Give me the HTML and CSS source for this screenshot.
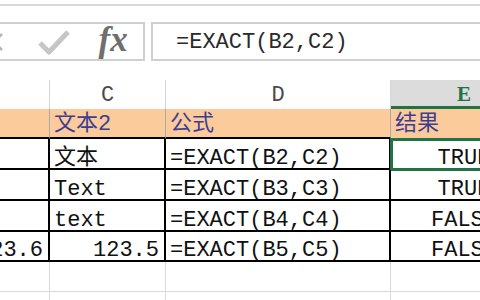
FILE: index.html
```html
<!DOCTYPE html>
<html lang="zh-CN">
<head>
  <meta charset="UTF-8">
  <meta name="viewport" content="width=device-width, initial-scale=1.0">
  <title>EXACT</title>
  <link rel="stylesheet" href="styles.css">
</head>
<body>
  <div class="ribbon-edge"></div>

  <div class="formula-row">
    <div class="tools">
      <span class="tool">
        <svg width="24" height="24" viewBox="0 0 24 24"><path d="M4 4 L20 20 M20 4 L4 20" stroke="#b4b4b4" stroke-width="2.5" fill="none"/></svg>
      </span>
      <span class="tool">
        <svg width="32" height="28" viewBox="0 0 32 28"><path d="M2 15 L11 24 L30 4" stroke="#c6c6c6" stroke-width="5" fill="none" stroke-linejoin="round"/></svg>
      </span>
      <span class="tool fx">fx</span>
    </div>
    <div class="formula-input">=EXACT(B2,C2)</div>
  </div>

  <div class="sheet">
    <div class="col-head"></div>
    <div class="col-head">C</div>
    <div class="col-head">D</div>
    <div class="col-head active">E</div>

    <div class="label"></div>
    <div class="label">文本2</div>
    <div class="label">公式</div>
    <div class="label last">结果</div>

    <div class="cell"></div>
    <div class="cell">文本</div>
    <div class="cell">=EXACT(B2,C2)</div>
    <div class="cell mid selected">TRUE</div>

    <div class="cell"></div>
    <div class="cell">Text</div>
    <div class="cell">=EXACT(B3,C3)</div>
    <div class="cell mid">TRUE</div>

    <div class="cell"></div>
    <div class="cell">text</div>
    <div class="cell">=EXACT(B4,C4)</div>
    <div class="cell mid">FALSE</div>

    <div class="cell num">123.6</div>
    <div class="cell num">123.5</div>
    <div class="cell">=EXACT(B5,C5)</div>
    <div class="cell mid">FALSE</div>

    <div class="empty"></div>
    <div class="empty"></div>
    <div class="empty"></div>
    <div class="empty"></div>

    <div class="empty"></div>
    <div class="empty"></div>
    <div class="empty"></div>
    <div class="empty"></div>
  </div>
</body>
</html>
```

FILE: styles.css
```css
body {
  margin: 0;
  width: 480px;
  height: 300px;
  overflow: hidden;
  background: #fff;
  font-family: "Liberation Mono", "Noto Sans CJK SC", monospace;
  color: #111;
}

.ribbon-edge {
  margin-top: 4px;
  border-top: 2px solid #d8d8d8;
}

.formula-row {
  display: flex;
  gap: 6px;
  height: 39px;
  margin-top: 16px;
  margin-right: -30px;
}

.tools {
  display: flex;
  align-items: center;
  box-sizing: border-box;
  width: 183px;
  margin-left: -38px;
  border: 2px solid #d0d0d0;
}

.tool {
  display: flex;
  justify-content: center;
  align-items: center;
  width: 60px;
}

.fx {
  font-family: "Liberation Serif", serif;
  font-style: italic;
  font-weight: bold;
  font-size: 35px;
  color: #6e6e6e;
  margin-top: -4px;
}

.formula-input {
  flex: 1;
  display: flex;
  align-items: center;
  box-sizing: border-box;
  border: 2px solid #d0d0d0;
  padding: 2px 0 0 23px;
  font-size: 22px;
  color: #2a2a2a;
}

.sheet {
  display: grid;
  grid-template-columns: 160px 116px 225px 147px;
  grid-template-rows: 29px 30px 31px 31px 31px 30px 30px 30px;
  margin-top: 19px;
  margin-left: -110px;
}

.sheet > div {
  box-sizing: border-box;
  display: flex;
  align-items: flex-end;
  line-height: 18px;
  font-size: 22px;
  white-space: nowrap;
  overflow: hidden;
}

.col-head {
  justify-content: center;
  padding-bottom: 4px;
  border-right: 1px solid #d6d6d6;
  color: #4a4a4a;
  font-size: 21px;
}

.col-head.active {
  background: #dcdcdc;
  border-bottom: 3px solid #217346;
  padding-bottom: 3px;
  color: #217346;
  font-family: "Liberation Serif", serif;
  font-weight: bold;
  font-size: 21px;
}

.label {
  background: #fccb9c;
  border-right: 1px solid #a8a8a8;
  border-bottom: 2px solid #000;
  padding: 0 4px 3px;
  color: #3d3d92;
  font-size: 21px;
}

.label.last {
  border-bottom-color: #fccb9c;
}

.cell {
  border-right: 2px solid #000;
  border-bottom: 2px solid #000;
  padding: 0 5px 0 4px;
}

.cell.num {
  justify-content: flex-end;
}

.cell.mid {
  justify-content: center;
  border-right: none;
}

.selected {
  outline: 3px solid #217346;
  outline-offset: -2px;
}

.empty {
  border-right: 1px solid #d9d9d9;
  border-bottom: 1px solid #d9d9d9;
}
```
